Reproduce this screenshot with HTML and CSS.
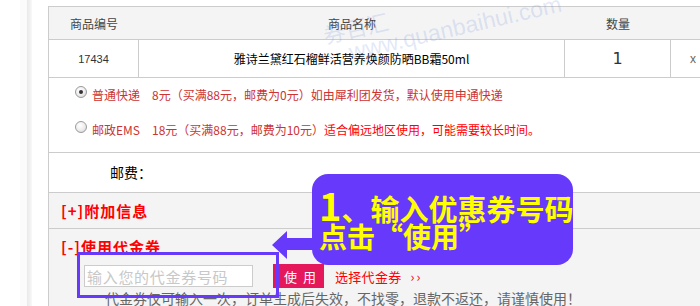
FILE: index.html
```html
<!DOCTYPE html>
<html lang="zh-CN">
  <head>
    <meta charset="UTF-8" />
    <meta name="viewport" content="width=device-width, initial-scale=1.0" />
    <title>订单结算</title>
    <link rel="stylesheet" href="styles.css">
  </head>
  <body>
    <div class="page">
      <div class="rail"></div>
      <div class="order">
        <table class="goods">
          <colgroup>
            <col class="c-id" />
            <col class="c-name" />
            <col class="c-qty" />
            <col class="c-del" />
          </colgroup>
          <tr>
            <th>商品编号</th>
            <th>商品名称</th>
            <th>数量</th>
            <th></th>
          </tr>
          <tr>
            <td class="sku">17434</td>
            <td class="name">雅诗兰黛红石榴鲜活营养焕颜防晒BB霜50ml</td>
            <td class="qty">1</td>
            <td class="del">x</td>
          </tr>
        </table>

        <div class="ship">
          <div class="ship-row">
            <span class="radio checked"></span>
            <span class="ship-name">普通快递</span>
            <span class="ship-info">8元（买满88元，邮费为0元）如由犀利团发货，默认使用申通快递</span>
          </div>
          <div class="ship-row">
            <span class="radio"></span>
            <span class="ship-name">邮政EMS</span>
            <span class="ship-info">18元（买满88元，邮费为10元）<em>适合偏远地区使用，可能需要较长时间。</em></span>
          </div>
        </div>

        <div class="postage">邮费：</div>

        <div class="fold">[+]附加信息</div>

        <div class="coupon">
          <div class="fold-title">[-]使用代金券</div>
          <div class="coupon-row">
            <input type="text" class="coupon-input" placeholder="输入您的代金券号码" />
            <button class="coupon-btn">使用</button>
            <a class="coupon-pick">选择代金券<span class="more">››</span></a>
          </div>
          <p class="coupon-note">代金券仅可输入一次，订单生成后失效，不找零，退款不返还，请谨慎使用！</p>
        </div>
      </div>
    </div>

    <!-- watermark + tutorial annotation drawn over the page -->
    <span class="wm-logo">券百汇</span>
    <span class="wm-url">www.quanbaihui.com</span>

    <div class="focus"></div>
    <svg class="arrow" viewBox="0 0 45 35" width="45" height="35">
      <polygon points="2,17 17,3 17,10 45,10 45,22 17,22 17,31" fill="#6639fb" />
    </svg>
    <div class="tip">
      <div class="tip-line1"><span class="tip-num">1</span>、输入优惠券号码</div>
      <div class="tip-line2">点击“使用”</div>
    </div>
  </body>
</html>
```

FILE: styles.css
```css
* {
  box-sizing: border-box;
}
html,
body {
  margin: 0;
}
body {
  position: relative;
  width: 700px;
  height: 306px;
  overflow: hidden;
  background: #fff;
  font-family: "Noto Sans CJK SC", "Liberation Sans", sans-serif;
  font-size: 12px;
  color: #333;
}
.page {
  display: flex;
  height: 306px;
  padding-left: 20px;
}
.rail {
  flex: none;
  width: 12px;
  background: linear-gradient(to right, #fbfbfb 0, #fbfbfb 7px, #e9e9e9 7px, #f8f8f8 12px);
}
.order {
  flex: none;
  width: 700px;
  margin: 6px 0 0 16px;
  border-left: 1px solid #ccc;
  border-top: 1px solid #ccc;
}

/* goods table */
.goods {
  width: 666px;
  table-layout: fixed;
  border-collapse: separate;
  border-spacing: 0;
}
.c-id {
  width: 90px;
}
.c-name {
  width: 426px;
}
.c-qty {
  width: 106px;
}
.c-del {
  width: 44px;
}
.goods th {
  height: 33px;
  padding: 0;
  background: #f4f4f4;
  border-bottom: 1px solid #ccc;
  font-weight: normal;
  color: #444;
  font-size: 12px;
}
.goods td {
  height: 38px;
  padding: 0;
  text-align: center;
  border-bottom: 1px solid #ccc;
  border-right: 1px solid #ccc;
}
.goods td:last-child {
  border-right: none;
}
.sku {
  font-family: "Liberation Sans", sans-serif;
  font-size: 11px;
  color: #333;
}
.name {
  color: #000;
}
.qty {
  font-family: "DejaVu Sans", sans-serif;
  font-size: 16px;
  color: #333;
}
.del {
  font-family: "Liberation Sans", sans-serif;
  color: #666;
}

/* shipping */
.ship {
  height: 75px;
  padding: 8px 0 0 26px;
  border-bottom: 1px solid #ccc;
  display: flex;
  flex-direction: column;
  gap: 17px;
}
.ship-row {
  display: flex;
  align-items: flex-start;
  line-height: 18px;
  color: #c33;
}
.radio {
  flex: none;
  width: 12px;
  height: 12px;
  border: 1px solid #9a9a9a;
  border-radius: 50%;
  background: radial-gradient(circle at 40% 35%, #fff 0, #eee 50%, #cfcfcf 100%);
  position: relative;
}
.radio.checked::after {
  content: "";
  position: absolute;
  left: 3px;
  top: 3px;
  width: 4px;
  height: 4px;
  border-radius: 50%;
  background: #333;
}
.ship-name {
  width: 60px;
  margin-left: 5px;
}
.ship-info em {
  font-style: normal;
  color: #f00;
}

.postage {
  height: 40px;
  padding-left: 61px;
  line-height: 39px;
  font-size: 14px;
  color: #000;
  border-bottom: 1px solid #ccc;
}
.fold {
  height: 36px;
  padding-left: 12px;
  line-height: 35px;
  background: #f4f4f4;
  border-bottom: 1px solid #ccc;
  color: #f00;
  font-size: 15px;
  font-weight: bold;
  letter-spacing: 1px;
}

/* coupon */
.coupon {
  height: 100px;
  padding: 8px 0 0 12px;
  background: #f4f4f4;
}
.fold-title {
  line-height: 20px;
  color: #f00;
  font-size: 15px;
  font-weight: bold;
  letter-spacing: 1px;
}
.coupon-row {
  display: flex;
  align-items: center;
  margin: 7px 0 0 23px;
  height: 24px;
}
.coupon-input {
  width: 169px;
  height: 22px;
  margin: 0;
  padding: 0 2px;
  border: 1px solid #ccc;
  background: #fff;
  font-family: inherit;
  font-size: 15px;
  letter-spacing: 0.7px;
  outline: none;
}
.coupon-input::placeholder {
  color: #c8c8c8;
}
.coupon-btn {
  flex: none;
  width: 51px;
  height: 24px;
  margin-left: 20px;
  padding: 0 0 0 11px;
  border: none;
  background: #e5185b;
  color: #fff;
  font-family: inherit;
  font-size: 13px;
  letter-spacing: 6px;
  text-align: left;
  white-space: nowrap;
  overflow: hidden;
}
.coupon-pick {
  margin-left: 11px;
  color: #f00;
  font-size: 13px;
  letter-spacing: 0.3px;
  white-space: nowrap;
}
.more {
  margin-left: 9px;
  letter-spacing: 2px;
}
.coupon-note {
  margin: 0 0 0 44px;
  line-height: 20px;
  font-size: 14px;
  color: #666;
  white-space: nowrap;
}

/* overlays */
.wm-logo,
.wm-url {
  position: absolute;
  color: rgba(110, 140, 215, 0.2);
  white-space: nowrap;
  transform: rotate(-13deg);
  transform-origin: left bottom;
  pointer-events: none;
}
.wm-logo {
  left: 326px;
  top: 22px;
  font-size: 22px;
  line-height: 24px;
}
.wm-url {
  left: 352px;
  top: 40px;
  font-family: "Liberation Sans", sans-serif;
  font-size: 23px;
  line-height: 24px;
}
.focus {
  position: absolute;
  left: 77px;
  top: 252px;
  width: 202px;
  height: 46px;
  border: 3px solid #6639fb;
}
.arrow {
  position: absolute;
  left: 270px;
  top: 228px;
}
.tip {
  position: absolute;
  left: 312px;
  top: 174px;
  width: 261px;
  height: 91px;
  padding: 14px 0 0 7px;
  border-radius: 16px;
  background: #6639fb;
  color: #ff0;
  font-weight: 700;
  white-space: nowrap;
}
.tip-line1 {
  height: 34px;
  font-size: 29px;
  line-height: 34px;
}
.tip-num {
  font-size: 38px;
}
.tip-line2 {
  font-size: 28px;
  line-height: 28px;
}
```
